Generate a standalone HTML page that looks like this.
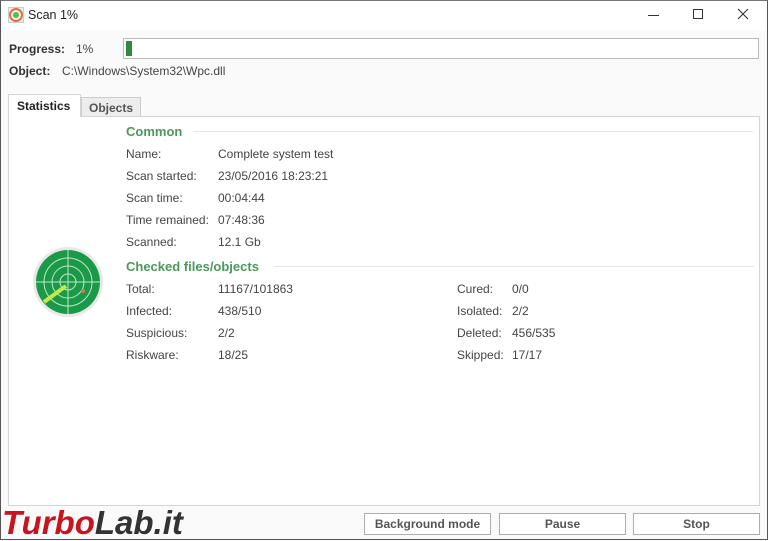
<!DOCTYPE html>
<html><head><style>
*{margin:0;padding:0;box-sizing:border-box}
body{width:768px;height:540px;background:#fafafa;font-family:"Liberation Sans",sans-serif;font-size:12px;color:#444;position:relative;overflow:hidden}
.a{position:absolute;white-space:nowrap}
.win{position:absolute;left:0;top:0;width:768px;height:540px;border:1px solid #555;border-top:1px solid #777}
.g{color:#4a9a5a;font-weight:bold;font-size:13px}
.line{position:absolute;height:1px;background:#e6e6e6}
.btn{position:absolute;top:513px;height:22px;border:1px solid #adadad;background:#fff;text-align:center;line-height:21px;font-weight:bold;color:#555;font-size:12px}
</style></head><body>
<div class="win"></div>
<div class="a" style="left:1px;top:1px;width:766px;height:29px;background:#fff"></div>
<svg class="a" style="left:8px;top:7px" width="16" height="16"><rect x="0.5" y="0.5" width="15" height="15" fill="#eee" stroke="#ccc"/><circle cx="8" cy="8" r="6" fill="none" stroke="#e2743a" stroke-width="2"/><circle cx="8" cy="8" r="3" fill="#5cb85c"/></svg>
<div class="a" style="left:28px;top:8px;font-size:12.5px;color:#222">Scan 1%</div>
<div class="a" style="left:648px;top:15px;width:11px;height:1px;background:#333"></div>
<div class="a" style="left:693px;top:9px;width:10px;height:10px;border:1px solid #333"></div>
<svg class="a" style="left:737px;top:8px" width="12" height="12"><path d="M1 1L11 11M11 1L1 11" stroke="#333" stroke-width="1.1"/></svg>
<div class="a" style="left:9px;top:42px;font-weight:bold;color:#333">Progress:</div>
<div class="a" style="left:76px;top:42px">1%</div>
<div class="a" style="left:123px;top:38px;width:636px;height:21px;border:1px solid #bbb;background:#fff"></div>
<div class="a" style="left:126px;top:41px;width:6px;height:15px;background:#2e8b3e"></div>
<div class="a" style="left:9px;top:64px;font-weight:bold;color:#333">Object:</div>
<div class="a" style="left:62px;top:64px">C:\Windows\System32\Wpc.dll</div>
<div class="a" style="left:8px;top:116px;width:752px;height:390px;border:1px solid #d4d4d4;background:#fff"></div>
<div class="a" style="left:8px;top:94px;width:73px;height:23px;border:1px solid #d4d4d4;border-bottom:none;background:#fff;font-weight:bold;padding:4px 0 0 8px;color:#222">Statistics</div>
<div class="a" style="left:81px;top:97px;width:60px;height:19px;border:1px solid #ccc;border-bottom:none;background:#ededed;font-weight:bold;padding:3px 0 0 7px;color:#555">Objects</div>
<div class="a g" style="left:126px;top:124px">Common</div>
<div class="line" style="left:193px;top:131px;width:560px"></div>
<div class="a" style="left:126px;top:147px">Name:</div><div class="a" style="left:218px;top:147px">Complete system test</div>
<div class="a" style="left:126px;top:169px">Scan started:</div><div class="a" style="left:218px;top:169px">23/05/2016 18:23:21</div>
<div class="a" style="left:126px;top:191px">Scan time:</div><div class="a" style="left:218px;top:191px">00:04:44</div>
<div class="a" style="left:126px;top:213px">Time remained:</div><div class="a" style="left:218px;top:213px">07:48:36</div>
<div class="a" style="left:126px;top:235px">Scanned:</div><div class="a" style="left:218px;top:235px">12.1 Gb</div>
<div class="a g" style="left:126px;top:259px">Checked files/objects</div>
<div class="line" style="left:274px;top:266px;width:480px"></div>
<div class="a" style="left:126px;top:282px">Total:</div><div class="a" style="left:218px;top:282px">11167/101863</div>
<div class="a" style="left:126px;top:304px">Infected:</div><div class="a" style="left:218px;top:304px">438/510</div>
<div class="a" style="left:126px;top:326px">Suspicious:</div><div class="a" style="left:218px;top:326px">2/2</div>
<div class="a" style="left:126px;top:348px">Riskware:</div><div class="a" style="left:218px;top:348px">18/25</div>
<div class="a" style="left:457px;top:282px">Cured:</div><div class="a" style="left:512px;top:282px">0/0</div>
<div class="a" style="left:457px;top:304px">Isolated:</div><div class="a" style="left:512px;top:304px">2/2</div>
<div class="a" style="left:457px;top:326px">Deleted:</div><div class="a" style="left:512px;top:326px">456/535</div>
<div class="a" style="left:457px;top:348px">Skipped:</div><div class="a" style="left:512px;top:348px">17/17</div>
<svg class="a" style="left:32px;top:246px" width="72" height="72"><circle cx="36" cy="36" r="35" fill="#e8e8e8"/><circle cx="36" cy="36" r="32" fill="#1a9a48"/><g fill="none" stroke="#bfe8c8" stroke-width="1"><circle cx="36" cy="36" r="8"/><circle cx="36" cy="36" r="16"/><circle cx="36" cy="36" r="24"/><path d="M36 4V68M4 36H68"/></g><path d="M12 56L34 40" stroke="#c8e84a" stroke-width="4"/><circle cx="51" cy="45" r="2" fill="#b84"/></svg>
<div class="btn" style="left:364px;width:127px">Background mode</div>
<div class="btn" style="left:499px;width:127px">Pause</div>
<div class="btn" style="left:633px;width:127px">Stop</div>
<div class="a" style="left:2px;top:506px;font-size:33px;font-weight:bold;font-style:italic;letter-spacing:0;line-height:34px"><span style="color:#c8141e">Turbo</span><span style="color:#333">Lab.it</span></div>
</body></html>
